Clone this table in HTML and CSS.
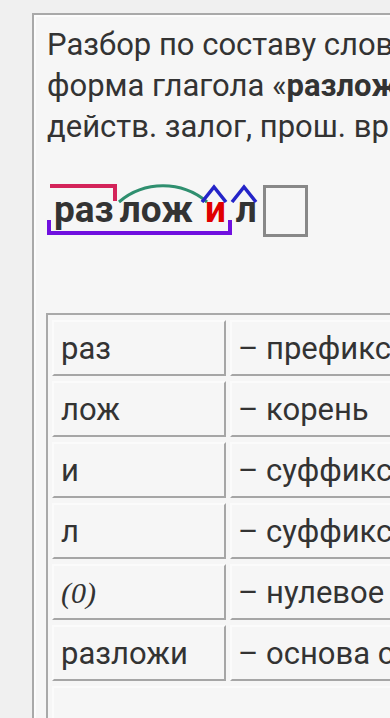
FILE: index.html
```html
<!DOCTYPE html>
<html lang="ru">
<head>
<meta charset="utf-8">
<title>Разбор по составу слова «разложил»</title>
<link rel="stylesheet" href="styles.css">
</head>
<body>
<div class="page">
  <div class="card">
    <p class="intro">Разбор по составу слова «разложил» —<br>форма глагола «<b>разложить</b>»;<br>действ. залог, прош. вр., изъяв. накл.</p>

    <div class="morph">
      <span class="stem">
        <span class="m pre">раз</span>
        <span class="m root">лож<svg class="arc" width="92" height="20" viewBox="0 0 92 20"><path d="M2 18 A68 68 0 0 1 90 18" fill="none" stroke="#2f8f6f" stroke-width="3"/></svg></span>
        <span class="m suf red">и<svg class="caret" width="30" height="20" viewBox="0 0 30 20"><polyline points="2,19 14,4 26,19" fill="none" stroke="#2424c8" stroke-width="3.5"/></svg></span>
      </span>
      <span class="m suf last">л<svg class="caret" width="30" height="20" viewBox="0 0 30 20"><polyline points="2,19 14,4 26,19" fill="none" stroke="#2424c8" stroke-width="3.5"/></svg></span>
      <span class="ending"></span>
    </div>

    <table class="parts">
      <tr><td class="part">раз</td><td class="desc">– префикс</td></tr>
      <tr><td class="part">лож</td><td class="desc">– корень</td></tr>
      <tr><td class="part">и</td><td class="desc">– суффикс</td></tr>
      <tr><td class="part">л</td><td class="desc">– суффикс</td></tr>
      <tr><td class="part"><span class="zero">(0)</span></td><td class="desc">– нулевое окончание</td></tr>
      <tr><td class="part">разложи</td><td class="desc">– основа слова</td></tr>
      <tr class="blank"><td colspan="2"></td></tr>
    </table>
  </div>
</div>
</body>
</html>
```

FILE: styles.css
```css
html, body {
  margin: 0;
  padding: 0;
  overflow: hidden;
  background: #f0f0f0;
}

.page {
  padding: 13px 0 0 32px;
  font-family: Roboto, "Liberation Sans", sans-serif;
  color: #333333;
}

.card {
  width: 700px;
  min-height: 900px;
  background: #f6f6f6;
  border: 2px solid #a9a9a9;
  box-shadow: inset 0 0 0 2px #fcfcfc;
  padding: 9px 13px;
  box-sizing: border-box;
}

.intro {
  margin: 0;
  font-size: 31px;
  line-height: 41px;
  white-space: nowrap;
}

.intro b {
  font-weight: 700;
}

/* morpheme diagram */
.morph {
  display: flex;
  align-items: flex-start;
  margin-top: 29px;
}

.stem {
  position: relative;
  display: flex;
  padding: 0 4px 0 3px;
}

.stem::after {
  content: "";
  position: absolute;
  left: 0;
  right: 0;
  bottom: -5px;
  height: 11px;
  border: 4px solid #7010df;
  border-top: none;
}

.m {
  position: relative;
  display: block;
  padding: 14px 4px 0;
  font-size: 37px;
  font-weight: 700;
  line-height: 40px;
  color: #333333;
}

.m.pre {
  padding: 14px 3px 0 4px;
}

.m.root {
  padding: 14px 9px 0 3px;
}

.m.suf {
  padding: 14px 2px 0 3px;
}

.m.last {
  padding: 14px 6px 0 4px;
}

.red {
  color: #e00000;
}

.pre::before {
  content: "";
  position: absolute;
  left: 0;
  right: 0;
  top: 8px;
  height: 13px;
  border-top: 4px solid #d4245a;
  border-right: 4px solid #d4245a;
}

.arc {
  position: absolute;
  left: 0;
  top: 8px;
}

.caret {
  position: absolute;
  left: -2px;
  top: 7px;
}

.ending {
  display: block;
  width: 45px;
  height: 52px;
  margin-top: 9px;
  border: 3px solid #888888;
  box-sizing: border-box;
}

/* table */
.parts {
  margin: 76px 0 0 -1px;
  border: 2px solid #a9a9a9;
  border-collapse: separate;
  border-spacing: 4px 5px;
  font-size: 31px;
  color: #333333;
}

.parts td {
  height: 56px;
  box-sizing: border-box;
  padding: 0 6px;
  border-top: 2px solid #fbfbfb;
  border-left: 2px solid #fbfbfb;
  border-right: 2px solid #a6a6a6;
  border-bottom: 2px solid #a6a6a6;
  white-space: nowrap;
  vertical-align: middle;
}

.parts td.part {
  width: 174px;
  padding-left: 7px;
}

.parts td.desc {
  width: 380px;
}

.parts .blank td {
  height: 90px;
}

.zero {
  font-family: "Liberation Serif", "DejaVu Serif", serif;
  font-style: italic;
  font-size: 30px;
}
```
